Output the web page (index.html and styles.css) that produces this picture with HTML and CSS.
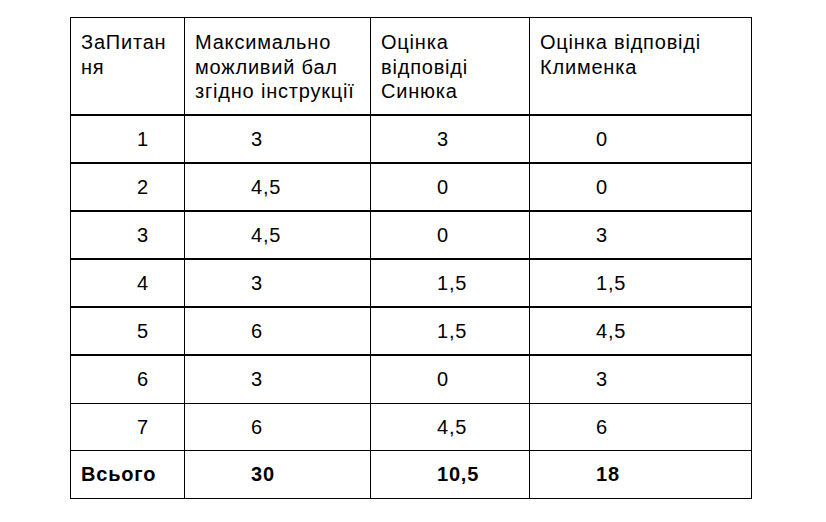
FILE: index.html
```html
<!DOCTYPE html>
<html lang="uk">
<head>
<meta charset="utf-8">
<link rel="stylesheet" href="styles.css">
</head>
<body>
<div class="grid">
  <div class="cell head">ЗаПитан<br>ня</div>
  <div class="cell head">Максимально<br>можливий бал<br>згідно інструкції</div>
  <div class="cell head">Оцінка<br>відповіді<br>Синюка</div>
  <div class="cell head">Оцінка відповіді<br>Клименка</div>

  <div class="cell num thick">1</div><div class="cell num thick">3</div><div class="cell num thick">3</div><div class="cell num thick">0</div>
  <div class="cell num thick">2</div><div class="cell num thick">4,5</div><div class="cell num thick">0</div><div class="cell num thick">0</div>
  <div class="cell num thick">3</div><div class="cell num thick">4,5</div><div class="cell num thick">0</div><div class="cell num thick">3</div>
  <div class="cell num thick">4</div><div class="cell num thick">3</div><div class="cell num thick">1,5</div><div class="cell num thick">1,5</div>
  <div class="cell num thick">5</div><div class="cell num thick">6</div><div class="cell num thick">1,5</div><div class="cell num thick">4,5</div>
  <div class="cell num">6</div><div class="cell num">3</div><div class="cell num">0</div><div class="cell num">3</div>
  <div class="cell num">7</div><div class="cell num">6</div><div class="cell num">4,5</div><div class="cell num">6</div>
  <div class="cell total">Всього</div><div class="cell num total">30</div><div class="cell num total">10,5</div><div class="cell num total">18</div>
</div>
</body>
</html>
```

FILE: styles.css
```css
html, body {
  margin: 0;
  padding: 0;
  background: #ffffff;
}

body {
  font-family: "Liberation Sans", Arial, sans-serif;
  font-size: 20px;
  line-height: 24px;
  letter-spacing: 0.8px;
  color: #000000;
}

.grid {
  margin: 17px 0 0 70px;
  width: 682px;
  box-sizing: border-box;
  border-left: 1px solid #000;
  border-top: 1px solid #000;
  display: grid;
  grid-template-columns: 114px 186px 159px 222px;
  grid-template-rows: 98px 48px 48px 48px 48px 48px 48px 47px 48px;
}

.cell {
  box-sizing: border-box;
  border-right: 1px solid #000;
  border-bottom: 1px solid #000;
  padding: 11px 4px 0 10px;
  white-space: nowrap;
}

.head {
  border-bottom-width: 2px;
  padding-top: 12px;
  line-height: 24.5px;
}

.thick {
  border-bottom-width: 2px;
}

.num {
  padding-left: 66px;
}

.total {
  font-weight: bold;
}
```
